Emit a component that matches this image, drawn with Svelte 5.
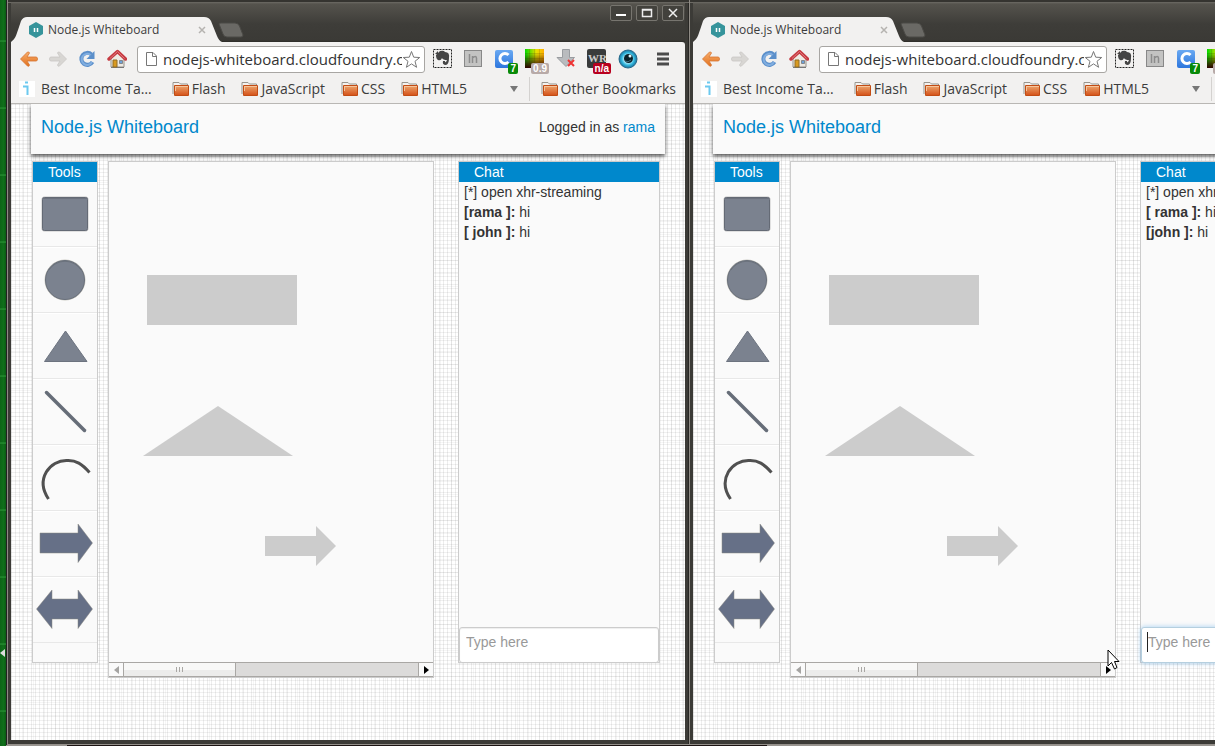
<script>
  const windows = [
    {
      id: 'rama',
      left: 7,
      focused: false,
      messages: [
        { from: '[rama ]:', text: 'hi' },
        { from: '[ john ]:', text: 'hi' }
      ]
    },
    {
      id: 'john',
      left: 689,
      focused: true,
      messages: [
        { from: '[ rama ]:', text: 'hi' },
        { from: '[john ]:', text: 'hi' }
      ]
    }
  ];
  const tools = ['Rectangle', 'Circle', 'Triangle', 'Line', 'Arc', 'Arrow', 'Double arrow'];
  const folders = ['Flash', 'JavaScript', 'CSS', 'HTML5'];
</script>

{#snippet folder()}
  <svg class="folder" width="17" height="16" viewBox="0 0 17 16" aria-hidden="true">
    <path d="M1 13V1.500h6l1.500 1.500h7V12" fill="#f4f2ef" stroke="#99958e" />
    <rect x="2" y="4" width="15" height="11" rx="1" fill="#c24c14" />
    <rect x="3" y="5" width="13" height="9" fill="url(#folder-fill)" />
    <path d="M3 5.500h13M3.500 5v5" stroke="#f6c49b" />
  </svg>
{/snippet}

{#snippet toolIcon(name)}
  <svg class="tool-icon" width="64" height="64" viewBox="0 0 64 64" aria-hidden="true">
    {#if name === 'Rectangle'}
      <rect x="9" y="15" width="46" height="34" rx="2" fill="#7b828f" stroke="#c5c5c5" />
      <rect x="9.500" y="15.500" width="45" height="33" rx="2" fill="none" stroke="#646a75" />
      <path d="M10 16.500h44" stroke="#6c727e" />
    {:else if name === 'Circle'}
      <circle cx="32" cy="32" r="20" fill="#7b828f" stroke="#c9c7c0" />
      <circle cx="32" cy="32" r="19.500" fill="none" stroke="#69707b" />
      <path d="M16 22a19 19 0 0 1 32 0" fill="none" stroke="#6b727c" />
    {:else if name === 'Triangle'}
      <path d="M32.500 17L54 47.500H11.500Z" fill="#7b828f" stroke="#6c737f" stroke-linejoin="round" />
    {:else if name === 'Line'}
      <path d="M13.500 12.500L51.500 50.500" stroke="#666d78" stroke-width="3.500" stroke-linecap="round" />
    {:else if name === 'Arc'}
      <path d="M15.500 53C2 33 17 14 34 14.500C43 14 49 18 56.500 26.500" fill="none" stroke="#505050" stroke-width="3" />
    {:else if name === 'Arrow'}
      <path d="M7 21h38V12L59.500 31L45 50.500V41H7Z" fill="#667087" stroke="#8a8983" stroke-width="0.500" />
    {:else}
      <path d="M3.500 31L19 12v9h26v-9L59.500 31L45 50.500V41H19v9.500Z" fill="#667087" stroke="#8a8983" stroke-width="0.500" />
    {/if}
  </svg>
{/snippet}

<svg class="defs" width="0" height="0" aria-hidden="true">
  <defs>
    <linearGradient id="folder-fill" x1="0" y1="0" x2="0" y2="1">
      <stop offset="0" stop-color="#eca36b" /><stop offset="1" stop-color="#d5551c" />
    </linearGradient>
    <linearGradient id="back-fill" x1="0" y1="0" x2="0" y2="1">
      <stop offset="0" stop-color="#f7ad6c" /><stop offset="1" stop-color="#e2711d" />
    </linearGradient>
    <linearGradient id="heat-x"><stop offset="0" stop-color="#00d800" /><stop offset="0.600" stop-color="#e8e000" /><stop offset="1" stop-color="#ffae00" /></linearGradient>
    <linearGradient id="heat-y" x1="0" y1="0" x2="0" y2="1"><stop offset="0.200" stop-color="#200" stop-opacity="0" /><stop offset="1" stop-color="#300000" /></linearGradient>
    <radialGradient id="eye-fill"><stop offset="0.400" stop-color="#b9efff" /><stop offset="0.700" stop-color="#31b6dc" /><stop offset="1" stop-color="#1b6f9a" /></radialGradient>
    <linearGradient id="blue-fill" x1="0" y1="0" x2="0" y2="1"><stop offset="0" stop-color="#6aa9f2" /><stop offset="1" stop-color="#2d76dd" /></linearGradient>
  </defs>
</svg>

<div class="desktop">
  <span class="peek" aria-hidden="true"></span>
  {#each windows as win (win.id)}
    <section class="window" style:left="{win.left}px" aria-label="Node.js Whiteboard">
      <header class="titlebar">
        <div class="tab">
          <svg class="tab-shape" width="208" height="26" viewBox="0 0 208 26" aria-hidden="true">
            <path d="M0 26C4 23 5 20 7 14L10 5Q12 1 16 1H193Q198 1 200 5L206 20Q208 25 211 26Z" fill="#f2f1f0" />
          </svg>
          <svg class="favicon" width="16" height="16" viewBox="0 0 16 16" aria-hidden="true">
            <path d="M8 0l7 4v8l-7 4l-7-4V4Z" fill="#36949b" />
            <path d="M6.500 6v4M9.500 6v4" stroke="#fff" stroke-width="1.500" />
          </svg>
          <span class="tab-title">Node.js Whiteboard</span>
          <button class="tab-close" aria-label="Close tab">
            <svg width="8" height="8" viewBox="0 0 8 8"><path d="M1 1l6 6M7 1L1 7" stroke="#b5b3b0" stroke-width="1.500" /></svg>
          </button>
        </div>
        <button class="new-tab" aria-label="New tab">
          <svg width="26" height="16" viewBox="0 0 26 16"><path d="M1 2Q1 1 3 1H17Q20 1 21.500 4L25 13Q25 15 23 15H9Q6 15 5 12Z" fill="#6a6965" stroke="#4b4a46" /></svg>
        </button>
        <div class="controls">
          <button aria-label="Minimize"><svg width="12" height="12" viewBox="0 0 12 12"><path d="M1 8h10" stroke="#fff" stroke-width="2" /></svg></button>
          <button aria-label="Maximize"><svg width="12" height="12" viewBox="0 0 12 12"><path d="M1.500 2.500h9v7h-9ZM1 3h10" fill="none" stroke="#eee" stroke-width="1.500" /></svg></button>
          <button aria-label="Close"><svg width="12" height="12" viewBox="0 0 12 12"><path d="M2 2l8 8M10 2l-8 8" stroke="#eee" stroke-width="1.500" /></svg></button>
        </div>
      </header>

      <nav class="toolbar" aria-label="Browser">
        <button class="nav" aria-label="Back"><svg width="20" height="18" viewBox="0 0 20 18"><path d="M1.500 9L8.500 2Q10 1.500 10.500 3L8 7H17Q18.500 7 18.500 9T17 11H8L10.500 15Q10 17 8.500 16Z" fill="url(#back-fill)" stroke="#d77531" stroke-width="0.800" /></svg></button>
        <button class="nav" aria-label="Forward"><svg width="20" height="18" viewBox="0 0 20 18"><path d="M18.500 9L11.500 2Q10 1.500 9.500 3L12 7H3Q1.500 7 1.500 9T3 11H12L9.500 15Q10 17 11.500 16Z" fill="#d8d6d3" stroke="#c9c7c4" stroke-width="0.800" /></svg></button>
        <button class="nav" aria-label="Reload"><svg width="20" height="18" viewBox="0 0 20 18"><path d="M14.500 4.500A6 6 0 1 0 15.500 12" fill="none" stroke="#5b8fca" stroke-width="4" /><path d="M17.500 1v8h-8Z" fill="#5b8fca" /><path d="M13.500 5A5.500 5.500 0 1 0 15 12" fill="none" stroke="#81aee0" stroke-width="2" /></svg></button>
        <button class="nav home" aria-label="Home"><svg width="20" height="20" viewBox="0 0 20 20"><path d="M4 8v10h13V8l-6.500-5Z" fill="#eeeae3" stroke="#96938c" /><path d="M4 18.500h13" stroke="#777" /><path d="M2 10l8.500-7.500l8 7.500" fill="none" stroke="#c63b42" stroke-width="3.500" stroke-linejoin="round" stroke-linecap="round" /><path d="M3 9.500l7.500-7l7 7" fill="none" stroke="#e0777b" stroke-width="1" /><path d="M6 11h4v7H6Z" fill="#d99a20" stroke="#916c25" /><path d="M12.500 11.500h3v3h-3Z" fill="#6ea2da" stroke="#777" stroke-width="0.800" /></svg></button>
        <div class="omnibox">
          <svg width="13" height="16" viewBox="0 0 13 16" aria-hidden="true"><path d="M1.500 1.500H8l3.500 3.500v9.500h-10ZM7.500 1.500v4h4" fill="#fff" stroke="#777" /></svg>
          <input type="text" aria-label="Address" value="nodejs-whiteboard.cloudfoundry.com" />
          <button aria-label="Bookmark this page"><svg width="19" height="19" viewBox="0 0 19 19"><path d="M9.500 1.500l2.200 5.700 6 .3-4.700 3.800 1.600 6-5.100-3.400-5.100 3.400 1.600-6L1.300 7.500l6-.3Z" fill="#fff" stroke="#777" /></svg></button>
        </div>
        <div class="extensions">
          <button aria-label="Clipper"><svg width="26" height="26" viewBox="0 0 26 26"><rect x="3.500" y="3.500" width="18" height="18" fill="none" stroke="#222" stroke-dasharray="2 1" /><path d="M6 9l4-4q4-1 5 1q5 0 4 6q0 6-3 7q-4 0-3-4h2q0 2 1 1l1-2q-4 0-5-2q-1 3-4 2q-2-1-2-5ZM5 8l3-3v3Z" fill="#444" /></svg></button>
          <button aria-label="Profile"><svg width="26" height="26" viewBox="0 0 26 26"><rect x="3.500" y="4.500" width="17" height="16" fill="#c3c3c2" stroke="#888" /><path d="M8.500 8v9M11.500 17v-7M11.500 12q3.500-3 4 0v5" fill="none" stroke="#8c8c8c" stroke-width="1.500" /></svg></button>
          <button aria-label="C extension"><svg width="26" height="26" viewBox="0 0 26 26"><rect x="3" y="4" width="18" height="18" rx="2" fill="url(#blue-fill)" /><path d="M16.500 9A5 5 0 1 0 16.500 16" fill="none" stroke="#fff" stroke-width="3" /></svg><span class="badge green">7</span></button>
          <button aria-label="Page speed"><svg width="26" height="26" viewBox="0 0 26 26"><rect x="2" y="3" width="19" height="19" fill="url(#heat-x)" /><rect x="2" y="3" width="19" height="19" fill="url(#heat-y)" /><path d="M6.500 3v19M11.500 3v19M16.500 3v19M2 7.500h19M2 12.500h19M2 17.500h19" stroke="#320" stroke-opacity="0.150" /></svg><span class="badge silver">0.9</span></button>
          <button aria-label="Download"><svg width="26" height="26" viewBox="0 0 26 26"><path d="M8.500 3.500h7v8h5L12 20.500L3 11.500h5.500Z" fill="#b9bbbe" stroke="#999ca0" /><path d="M14 14l6 6M20 14l-6 6" stroke="#e33" stroke-width="2" /></svg></button>
          <button aria-label="Rank"><svg width="26" height="26" viewBox="0 0 26 26"><rect x="2" y="3" width="19" height="19" rx="2" fill="#393b3b" /><text x="3" y="16" fill="#ccc" font-size="11" font-weight="bold" font-family="Liberation Serif">WR</text></svg><span class="badge red">n/a</span></button>
          <button aria-label="Eye"><svg width="26" height="26" viewBox="0 0 26 26"><circle cx="12" cy="13" r="9" fill="url(#eye-fill)" stroke="#26698a" /><circle cx="12.500" cy="12.500" r="4.500" fill="#0a2129" /><circle cx="14" cy="10" r="1.500" fill="#e6fbff" /><path d="M9 15q3 2 6-1" fill="none" stroke="#3f6f80" /></svg></button>
        </div>
        <button class="menu" aria-label="Menu"><svg width="14" height="14" viewBox="0 0 14 14"><path d="M1 2h12M1 7h12M1 12h12" stroke="#4b4b4b" stroke-width="3" stroke-linecap="butt" /></svg></button>
      </nav>

      <nav class="bookmarks" aria-label="Bookmarks">
        <a class="first" href="#income"><span class="i-icon"><svg width="16" height="16" viewBox="0 0 16 16" aria-hidden="true"><path d="M6 1.500h3M4 5.500h4.500V14" fill="none" stroke="#6cc9ef" stroke-width="2" /></svg></span>Best Income Ta…</a>
        {#each folders as name}
          <a href="#{name}">{@render folder()}{name}</a>
        {/each}
        <button class="more" aria-label="More bookmarks"><svg width="8" height="6" viewBox="0 0 8 6"><path d="M0 0h8L4 6Z" fill="#777" /></svg></button>
        <a class="other" href="#other">{@render folder()}Other Bookmarks</a>
      </nav>

      <main class="page">
        <header class="brandbar">
          <a class="brand" href="#home">Node.js Whiteboard</a>
          <p>Logged in as <a href="#user">rama</a></p>
        </header>
        <div class="workspace">
          <aside class="tools">
            <h2>Tools</h2>
            {#each tools as tool}
              <button class="tool" aria-label={tool}>{@render toolIcon(tool)}</button>
            {/each}
          </aside>
          <div class="board">
            <svg class="drawing" width="324" height="500" viewBox="0 0 324 500" role="img" aria-label="Drawing">
              <g fill="#ccc">
                <rect x="38" y="113" width="150" height="50" />
                <path d="M109 244L184 294H34Z" />
                <path d="M156 374h51v-10l20 20l-20 20v-10h-51Z" />
              </g>
            </svg>
            <div class="scrollbar">
              <button aria-label="Scroll left"><svg width="5" height="8" viewBox="0 0 5 8"><path d="M5 0v8L0 4Z" fill="#a5a4a2" /></svg></button>
              <span class="thumb"><i></i><i></i><i></i></span>
              <span class="track"></span>
              <button class="right" aria-label="Scroll right"><svg width="5" height="8" viewBox="0 0 5 8"><path d="M0 0v8L5 4Z" fill="#000" /></svg></button>
            </div>
          </div>
          <section class="chat">
            <h2>Chat</h2>
            <div class="log">
              <p>[*] open xhr-streaming</p>
              {#each win.messages as m}
                <p><b>{m.from}</b> {m.text}</p>
              {/each}
            </div>
            <div class="entry" class:focused={win.focused}>
              <input type="text" placeholder="Type here" aria-label="Chat message" />
              {#if win.focused}<span class="caret"></span>{/if}
            </div>
          </section>
        </div>
      </main>
    </section>
  {/each}
  <svg class="pointer" width="13" height="21" viewBox="0 0 13 21" aria-hidden="true">
    <path d="M1 1v16l3.500-3.500L7.500 20l2.500-1.500L7.500 12.500H12Z" fill="#fff" stroke="#000" />
  </svg>
</div>

<style>
  :global(body) { margin: 0; }
  :global(*) { box-sizing: border-box; }
  button { padding: 0; border: 0; background: none; display: grid; place-items: center; }
  a { color: inherit; text-decoration: none; }
  p, h2 { margin: 0; font-weight: normal; }
  svg { display: block; flex: none; }
  .defs { position: absolute; }
  .desktop {
    position: relative;
    min-height: 100vh;
    overflow: hidden;
    background:
      linear-gradient(transparent 60%, #2f9a3b 61%, transparent 63%) 0 0 / 6px 67px repeat-y,
      linear-gradient(90deg, #0d6417, #10701b 60%, #0a5a13) 0 0 / 6px 100% no-repeat,
      linear-gradient(#1c1413, #1c1413) 67px 100% / 700px 1px no-repeat,
      linear-gradient(#9a9691, #9a9691) 0 100% / 100% 1px no-repeat,
      #222;
    font-family: "Open Sans", "Noto Sans", sans-serif;
    color: #3c3c3c;
  }
  .peek {
    position: absolute;
    left: 0;
    top: 649px;
    border: 4px solid transparent;
    border-left: 0;
    border-right: 5px solid #ddd;
  }
  .window {
    position: absolute;
    top: 0;
    bottom: 1px;
    width: 682px;
    padding: 0 4px 4px;
    display: flex;
    flex-direction: column;
    background: #3c3b37;
    border: solid #94908b;
    border-width: 0 0 1px 0;
    box-shadow: inset 1px 0 #8f8b85, inset 0 2px #353430, inset 0 3px #6d6b65, inset -1px 0 #292825;
  }
  .titlebar {
    display: flex;
    align-items: flex-end;
    height: 42px;
    background: linear-gradient(#353430 2px, #6d6b65 2px, #55534d 4px, #3e3d39 24px, #3b3a36 40px, #2d2c29);
  }
  .tab {
    position: relative;
    display: flex;
    align-items: center;
    width: 206px;
    height: 25px;
    padding: 0 11px 0 17px;
    font-size: 12px;
  }
  .tab-shape { position: absolute; left: 0; top: -1px; overflow: visible; }
  .favicon, .tab-title, .tab-close { position: relative; }
  .tab-title { flex: 1; margin-left: 4px; white-space: nowrap; }
  .new-tab { margin: 0 0 4px 1px; }
  .controls { display: flex; gap: 4px; align-self: flex-start; margin: 5px 0 0 auto; padding-right: 1px; }
  .controls button { width: 22px; height: 16px; border: 1px solid #77756f; border-radius: 2px; background: #42413c; }
  .toolbar {
    display: flex;
    align-items: center;
    height: 34px;
    padding: 0 15px 0 8px;
    background: #f2f1f0;
    border-radius: 0 3px 0 0;
  }
  .nav { width: 20px; margin-right: 9px; }
  .home { margin: 0 10px 0 1px; }
  .omnibox {
    display: flex;
    flex: 1;
    align-items: center;
    min-width: 0;
    height: 27px;
    padding: 0 3px 0 7px;
    border: 1px solid #a8a6a3;
    border-radius: 3px;
    background: #fff;
  }
  .omnibox input {
    flex: 1;
    min-width: 0;
    margin-left: 5px;
    padding: 0;
    border: 0;
    outline: 0;
    font: 15px/20px "Open Sans", "Noto Sans", sans-serif;
    color: #333;
  }
  .extensions { display: flex; gap: 5px; margin-left: 5px; }
  .extensions button { position: relative; width: 26px; height: 26px; }
  .badge {
    position: absolute;
    right: 0;
    bottom: -2px;
    padding: 0 2px;
    border-radius: 2px;
    font: bold 10px/11px "Liberation Sans", sans-serif;
    color: #fff;
  }
  .green { background: #088a08; }
  .silver { background: #b8aaa8; }
  .red { background: #b8001e; }
  .menu { margin-left: 14px; }
  .bookmarks {
    display: flex;
    align-items: center;
    height: 28px;
    padding: 0 9px 2px 8px;
    background: #f2f1f0;
    border-bottom: 1px solid #b9b7b4;
    font-size: 14px;
    line-height: 20px;
    white-space: nowrap;
  }
  .bookmarks a { display: flex; align-items: center; gap: 3px; margin-right: 16px; }
  .bookmarks .first { gap: 6px; margin-right: 20px; }
  .i-icon { background: #fff; }
  .bookmarks .more { margin-left: auto; }
  .bookmarks .other { margin: 0 0 0 11px; padding-left: 11px; border-left: 1px solid #d4d2d0; height: 24px; }
  .page {
    flex: 1;
    padding: 0 20px;
    background-color: #fff;
    background-image:
      repeating-linear-gradient(90deg, rgba(0, 0, 0, 0.07) 0 1px, transparent 1px 4px),
      repeating-linear-gradient(rgba(0, 0, 0, 0.06) 0 1px, transparent 1px 4px),
      repeating-linear-gradient(90deg, rgba(0, 0, 0, 0.04) 0 1px, transparent 1px 11px),
      repeating-linear-gradient(rgba(0, 0, 0, 0.04) 0 1px, transparent 1px 13px);
    font: 14px/20px "Liberation Sans", Arial, sans-serif;
    color: #333;
  }
  .page a { color: #08c; }
  .brandbar {
    display: flex;
    justify-content: space-between;
    align-items: center;
    height: 50px;
    padding: 0 10px 4px;
    background: #fafafa;
    box-shadow: 0 2px 4px rgba(0, 0, 0, 0.7);
    clip-path: inset(0 -6px -8px);
  }
  .page .brand { font-size: 18px; }
  .workspace { display: flex; align-items: flex-start; padding: 7px 5px 0 1px; }
  .tools, .board, .chat { background: #fafafa; border: 1px solid #ccc; }
  .tools, .chat { height: 502px; }
  h2 { font-size: 14px; line-height: 20px; background: #08c; color: #fff; padding-left: 15px; }
  .tools { width: 66px; }
  .tool { width: 100%; height: 66px; border-top: 1px solid #fff; border-bottom: 1px solid #e8e8e8; }
  h2 + .tool { height: 65px; border-top: 0; }
  .board { margin-left: 10px; flex: 1; }
  .scrollbar { display: flex; height: 15px; border: 1px solid #a9a7a4; border-width: 1px 0; background: #dcdbda; }
  .scrollbar button { width: 15px; background: #fafafa; border-right: 1px solid #a9a7a4; }
  .scrollbar .right { border: 0; border-left: 1px solid #a9a7a4; }
  .thumb {
    display: flex;
    justify-content: center;
    align-items: center;
    gap: 2px;
    width: 112px;
    background: linear-gradient(#f8f8f7 50%, #ececeb 50%);
    border-right: 1px solid #a9a7a4;
  }
  .thumb i { width: 1px; height: 5px; background: #a9a7a4; }
  .track { flex: 1; }
  .chat { display: flex; flex-direction: column; width: 202px; margin-left: 24px; }
  .log { flex: 1; padding-left: 5px; }
  .entry { position: relative; height: 36px; margin-bottom: -1px; }
  .entry input {
    display: block;
    width: 100%;
    height: 100%;
    padding: 0 6px 6px;
    border: 1px solid #ccc;
    border-radius: 3px;
    outline: 0;
    background: #fff;
    font: 14px "Liberation Sans", Arial, sans-serif;
    box-shadow: inset 0 1px 1px rgba(0, 0, 0, 0.07);
  }
  .entry input::placeholder { color: #999; }
  .focused input { border-color: #b5cfdf; box-shadow: 0 0 5px rgba(82, 168, 236, 0.5); }
  .caret { position: absolute; left: 6px; top: 5px; width: 1px; height: 20px; background: #222; }
  .pointer { position: absolute; left: 1107px; top: 649px; }
</style>
